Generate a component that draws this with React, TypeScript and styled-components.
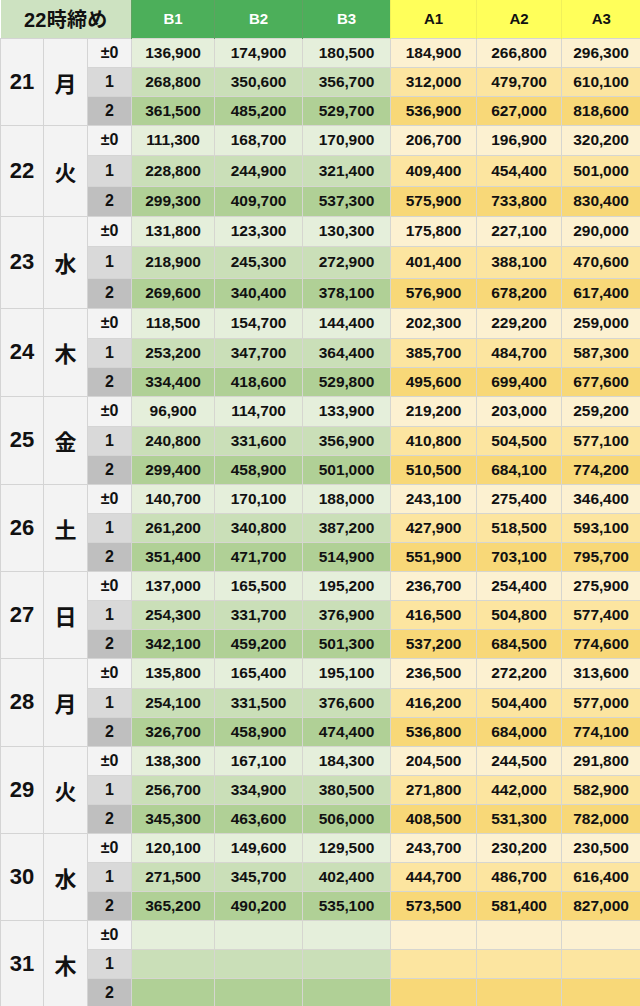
import React from "react";
import styled, { createGlobalStyle, css } from "styled-components";

const Global = createGlobalStyle`
  html, body { margin: 0; padding: 0; background: #ffffff; }
  body { font-family: "Liberation Sans", "Noto Sans CJK JP", sans-serif; }
`;

const Table = styled.table`
  width: 640px;
  border-collapse: collapse;
  table-layout: fixed;
  font-family: "Liberation Sans", "Noto Sans CJK JP", sans-serif;
  font-weight: 700;
  color: #111;
`;

const HeadRow = styled.tr`
  height: 38px;
`;

type HeadKind = "title" | "b" | "a";

const HeadCell = styled.th<{ $kind: HeadKind }>`
  padding: 0;
  text-align: center;
  vertical-align: middle;
  font-weight: 700;
  ${({ $kind }) =>
    $kind === "title"
      ? css`
          background: #cde2c1;
          color: #111;
          font-size: 20px;
          letter-spacing: 0.3px;
        `
      : $kind === "b"
      ? css`
          background: #4caf5a;
          color: #ffffff;
          font-size: 15px;
          border-left: 1px solid #5fa262;
        `
      : css`
          background: #ffff5a;
          color: #111;
          font-size: 15px;
          border-left: 1px solid #f0f05a;
        `}
`;

const BodyRow = styled.tr<{ $h: number }>`
  height: ${({ $h }) => $h}px;
`;

const DateCell = styled.td<{ $wide?: boolean }>`
  padding: 0;
  background: #f3f3f3;
  border: 1px solid #d4d4d4;
  text-align: center;
  vertical-align: middle;
  font-size: 22px;
  font-weight: 700;
`;

const subBg = ["#f3f3f3", "#d9d9d9", "#bfbfbf"];
const bBg = ["#e5efdb", "#cadfb8", "#b0d096"];
const aBg = ["#fcf1d1", "#fce5a0", "#f8d878"];

const SubCell = styled.td<{ $level: number }>`
  padding: 0;
  background: ${({ $level }) => subBg[$level]};
  border: 1px solid #d4d4d4;
  text-align: center;
  vertical-align: middle;
  font-size: 16px;
  font-weight: 700;
`;

const ValueCell = styled.td<{ $kind: "b" | "a"; $level: number }>`
  padding: 0;
  background: ${({ $kind, $level }) => ($kind === "b" ? bBg[$level] : aBg[$level])};
  border: 1px solid #d6d6d0;
  text-align: center;
  vertical-align: middle;
  font-size: 15.5px;
  font-weight: 700;
  letter-spacing: -0.1px;
`;

type Group = { day: string; wd: string; rows: string[][]; h: number[] };

const raw: [string, string, number[][] | null][] = [
  ["21", "月", [[136900,174900,180500,184900,266800,296300],[268800,350600,356700,312000,479700,610100],[361500,485200,529700,536900,627000,818600]]],
  ["22", "火", [[111300,168700,170900,206700,196900,320200],[228800,244900,321400,409400,454400,501000],[299300,409700,537300,575900,733800,830400]]],
  ["23", "水", [[131800,123300,130300,175800,227100,290000],[218900,245300,272900,401400,388100,470600],[269600,340400,378100,576900,678200,617400]]],
  ["24", "木", [[118500,154700,144400,202300,229200,259000],[253200,347700,364400,385700,484700,587300],[334400,418600,529800,495600,699400,677600]]],
  ["25", "金", [[96900,114700,133900,219200,203000,259200],[240800,331600,356900,410800,504500,577100],[299400,458900,501000,510500,684100,774200]]],
  ["26", "土", [[140700,170100,188000,243100,275400,346400],[261200,340800,387200,427900,518500,593100],[351400,471700,514900,551900,703100,795700]]],
  ["27", "日", [[137000,165500,195200,236700,254400,275900],[254300,331700,376900,416500,504800,577400],[342100,459200,501300,537200,684500,774600]]],
  ["28", "月", [[135800,165400,195100,236500,272200,313600],[254100,331500,376600,416200,504400,577000],[326700,458900,474400,536800,684000,774100]]],
  ["29", "火", [[138300,167100,184300,204500,244500,291800],[256700,334900,380500,271800,442000,582900],[345300,463600,506000,408500,531300,782000]]],
  ["30", "水", [[120100,149600,129500,243700,230200,230500],[271500,345700,402400,444700,486700,616400],[365200,490200,535100,573500,581400,827000]]],
  ["31", "木", null],
];

const heights: number[][] = [
  [29, 29, 29],
  [30, 31, 30],
  [30, 32, 30],
  [30, 29, 29],
  [30, 29, 29],
  [29, 29, 29],
  [29, 29, 29],
  [30, 29, 29],
  [29, 29, 29],
  [29, 29, 29],
  [29, 29, 29],
];

const fmt = (n: number) => n.toLocaleString("en-US");

const groups: Group[] = raw.map(([day, wd, rows], i) => ({
  day,
  wd,
  h: heights[i],
  rows: rows ? rows.map((r) => r.map(fmt)) : [0, 1, 2].map(() => ["", "", "", "", "", ""]),
}));

const subLabels = ["±0", "1", "2"];
const widths = [43, 44, 44, 83, 88, 88, 86, 85, 79];

export default function App() {
  return (
    <>
      <Global />
      <Table>
        <colgroup>
          {widths.map((w, i) => (
            <col key={i} style={{ width: w }} />
          ))}
        </colgroup>
        <thead>
          <HeadRow>
            <HeadCell $kind="title" colSpan={3}>22時締め</HeadCell>
            <HeadCell $kind="b">B1</HeadCell>
            <HeadCell $kind="b">B2</HeadCell>
            <HeadCell $kind="b">B3</HeadCell>
            <HeadCell $kind="a">A1</HeadCell>
            <HeadCell $kind="a">A2</HeadCell>
            <HeadCell $kind="a">A3</HeadCell>
          </HeadRow>
        </thead>
        <tbody>
          {groups.map((g) =>
            g.rows.map((r, li) => (
              <BodyRow key={g.day + "-" + li} $h={g.h[li]}>
                {li === 0 && (
                  <>
                    <DateCell rowSpan={3}>{g.day}</DateCell>
                    <DateCell rowSpan={3}>{g.wd}</DateCell>
                  </>
                )}
                <SubCell $level={li}>{subLabels[li]}</SubCell>
                {r.map((v, ci) => (
                  <ValueCell key={ci} $kind={ci < 3 ? "b" : "a"} $level={li}>
                    {v}
                  </ValueCell>
                ))}
              </BodyRow>
            ))
          )}
        </tbody>
      </Table>
    </>
  );
}
